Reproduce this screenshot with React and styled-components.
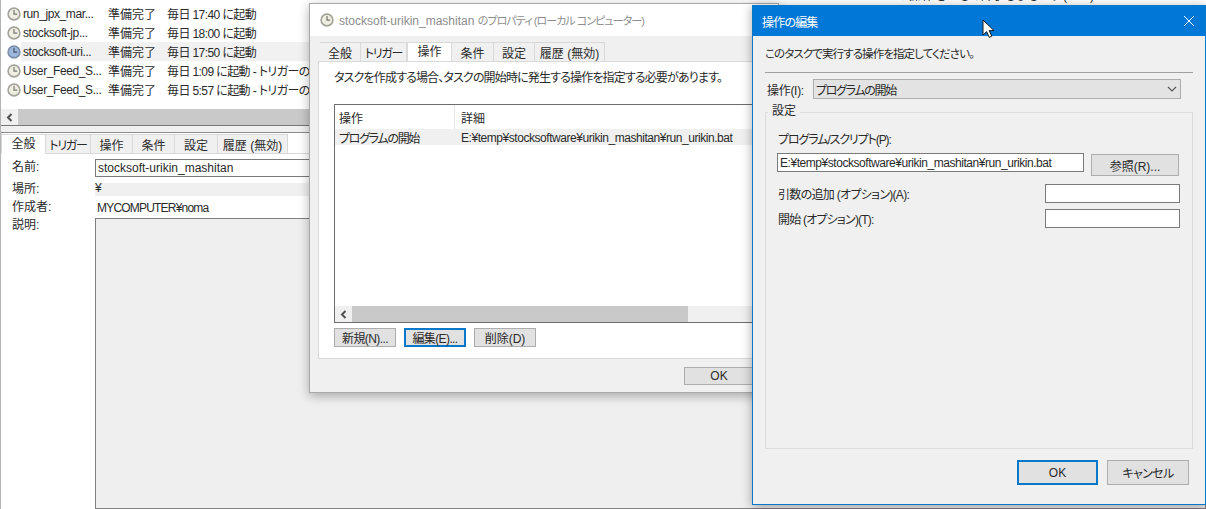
import React from "react";
import styled, { createGlobalStyle } from "styled-components";

const GlobalStyle = createGlobalStyle`
  html, body {
    margin: 0;
    padding: 0;
    background: #efefef;
  }
  * {
    box-sizing: border-box;
  }
`;

const Desktop = styled.div`
  position: relative;
  width: 1206px;
  height: 509px;
  overflow: hidden;
  background: #efefef;
  color: #2a2a2a;
  font-family: "Liberation Sans", "Noto Sans CJK JP", sans-serif;
  font-size: 12px;
  font-feature-settings: "palt";
  white-space: nowrap;
`;

const Squeezed = styled.span`
  letter-spacing: ${(p) => p.$ls}px;
  font-size: ${(p) => p.$size || 12}px;
`;

/* back window: task scheduler */
const MainWindow = styled.div`
  width: 100%;
  height: 100%;
  display: flex;
  flex-direction: column;
  border-left: 1px solid #b4b4b4;
`;

const TaskList = styled.div`
  height: 126px;
  background: #fff;
  border-bottom: 1px solid #777;
  display: flex;
  flex-direction: column;
  overflow: hidden;
  justify-content: flex-end;
`;

const TaskRow = styled.div`
  height: 19px;
  flex: none;
  display: flex;
  align-items: center;
  padding-left: 6px;
  background: ${(p) => (p.$selected ? "linear-gradient(90deg, #fff 20px, #f1f1f1 20px)" : "transparent")};
`;

const IconSlot = styled.div`
  width: 14px;
  height: 14px;
  flex: none;
  display: flex;
`;

const TaskName = styled.span`
  width: 85px;
  margin-left: 2px;
  letter-spacing: -0.4px;
`;

const TaskStatus = styled.span`
  width: 59px;
`;

const TaskTrigger = styled.span`
  width: 738px;
  flex: none;
  letter-spacing: -0.6px;
`;

const TaskResult = styled.span`
  letter-spacing: 0.9px;
  margin-left: -20px;
`;

const ListScroll = styled.div`
  height: 16px;
  flex: none;
  margin-top: 10px;
  background: #c9c9c9;
  display: flex;
`;

const ScrollArrow = styled.div`
  width: 17px;
  background: #f0f0f0;
  display: flex;
  align-items: center;
  justify-content: center;
`;

const Splitter = styled.div`
  height: 7px;
  flex: none;
  background: #f0f0f0;
  border-bottom: 1px solid #8c8c8c;
`;

const TabStrip = styled.div`
  display: flex;
  align-items: flex-end;
  height: ${(p) => p.$h}px;
  flex: none;
  padding-left: ${(p) => p.$pad}px;
  background: ${(p) => p.$bg || "#fff"};
  border-bottom: 1px solid #d9d9d9;
`;

const Tab = styled.div`
  width: ${(p) => p.$w}px;
  height: ${(p) => (p.$active ? "100%" : "calc(100% - 1px)")};
  display: flex;
  align-items: center;
  justify-content: center;
  background: ${(p) => (p.$active ? "#fff" : "#f0f0f0")};
  border: 1px solid #d9d9d9;
  border-left: ${(p) => (p.$active ? "1px solid #d9d9d9" : "none")};
  border-bottom: ${(p) => (p.$active ? "1px solid #fff" : "none")};
  margin-bottom: ${(p) => (p.$active ? "-1px" : "0")};
  padding-bottom: ${(p) => (p.$active ? "3px" : "0")};
  letter-spacing: ${(p) => (p.$tight ? "-1.2px" : "0")};
`;

const GeneralPane = styled.div`
  flex: 1;
  background: #fff;
  padding: 5px 0 0 11px;
  display: grid;
  grid-template-columns: 83px 1fr;
  grid-template-rows: 18px 22px 19px 1fr;
`;

const FieldLabel = styled.div`
  line-height: 15px;
  padding-top: ${(p) => p.$top || 0}px;
`;

const NameBox = styled.div`
  border: 1px solid #7a7a7a;
  border-right: none;
  padding: 0 2px;
  display: flex;
  align-items: center;
`;

const LocationStrip = styled.div`
  margin-top: 6px;
  height: 13px;
  background: #f0f0f0;
  line-height: 10px;
`;

const AuthorValue = styled.div`
  padding: 2px 2px 0;
  line-height: 15px;
  letter-spacing: -0.8px;
`;

const DescBox = styled.div`
  border: 1px solid #808080;
  background: #efefef;
`;

/* properties dialog */
const PropsWindow = styled.div`
  position: absolute;
  left: 309px;
  top: 3px;
  width: 470px;
  height: 390px;
  background: #f0f0f0;
  border: 1px solid #a8a8a8;
  box-shadow: 0 3px 10px rgba(0, 0, 0, 0.3);
  display: flex;
  flex-direction: column;
`;

const PropsTitle = styled.div`
  height: 32px;
  flex: none;
  background: #fff;
  display: flex;
  align-items: center;
  gap: 5px;
  padding-left: 10px;
  color: #8d8d8d;
`;

const PropsBody = styled.div`
  flex: 1;
  display: flex;
  flex-direction: column;
  padding: 5px 0 0 8px;
`;

const PropsTabs = styled(TabStrip)`
  background: #f0f0f0;
  border-bottom: none;
`;

const ActionPane = styled.div`
  height: 298px;
  background: #fff;
  border: 1px solid #d9d9d9;
  border-right: none;
  padding: 8px 0 0 15px;
  display: flex;
  flex-direction: column;
`;

const PaneText = styled.div`
  height: 16px;
  line-height: 16px;
  letter-spacing: -0.85px;
`;

const ActionTable = styled.div`
  margin-top: 18px;
  height: 219px;
  border: 1px solid #6d6d6d;
  border-right: none;
  display: flex;
  flex-direction: column;
`;

const TableHead = styled.div`
  height: 24px;
  flex: none;
  display: grid;
  grid-template-columns: 119px 1fr;
  align-items: center;
  > span {
    height: 100%;
    display: flex;
    align-items: center;
    padding-left: 4px;
  }
  > span + span {
    border-left: 1px solid #e5e5e5;
    padding-left: 6px;
  }
`;

const TableRow = styled.div`
  height: 16px;
  flex: none;
  display: grid;
  grid-template-columns: 119px 1fr;
  align-items: center;
  background: #f0f0f0;
  > span {
    padding-left: 4px;
    letter-spacing: -1.3px;
  }
  > span + span {
    padding-left: 7px;
    letter-spacing: -0.45px;
  }
`;

const TableSpace = styled.div`
  flex: 1;
`;

const TableScroll = styled.div`
  height: 16px;
  flex: none;
  display: flex;
  background: #f0f0f0;
`;

const ScrollThumb = styled.div`
  width: 336px;
  background: #c9c9c9;
`;

const ButtonRow = styled.div`
  display: flex;
  gap: ${(p) => p.$gap}px;
  margin-top: ${(p) => p.$top || 0}px;
  justify-content: ${(p) => (p.$end ? "flex-end" : "flex-start")};
  padding-right: ${(p) => p.$right || 0}px;
  padding-left: ${(p) => p.$left || 0}px;
`;

const Button = styled.div`
  width: ${(p) => p.$w}px;
  height: ${(p) => p.$h}px;
  flex: none;
  display: flex;
  align-items: center;
  justify-content: center;
  background: #e1e1e1;
  border: ${(p) => (p.$focus ? "2px solid #0a78c8" : "1px solid #adadad")};
  letter-spacing: ${(p) => (p.$tight ? "-0.6px" : "0")};
`;

/* edit dialog */
const EditWindow = styled.div`
  position: absolute;
  left: 752px;
  top: 5px;
  width: 454px;
  height: 500px;
  background: #f0f0f0;
  border: 1px solid #0a78c8;
  box-shadow: 0 2px 10px rgba(0, 0, 0, 0.35);
  display: flex;
  flex-direction: column;
`;

const EditTitle = styled.div`
  height: 30px;
  flex: none;
  background: #0078d7;
  color: #fff;
  display: flex;
  align-items: center;
  justify-content: space-between;
  padding: 0 10px 0 9px;
  letter-spacing: -0.8px;
`;

const EditBody = styled.div`
  flex: 1;
  display: flex;
  flex-direction: column;
  padding: 0 12px;
`;

const EditIntro = styled.div`
  height: 37px;
  padding-top: 10px;
  line-height: 16px;
  border-bottom: 1px solid #a0a0a0;
  font-size: 11.5px;
  letter-spacing: -0.9px;
`;

const ActionRow = styled.div`
  display: flex;
  align-items: center;
  gap: 9px;
  margin-top: 6px;
  padding: 0 12px 0 2px;
  letter-spacing: -0.3px;
`;

const ActionSelect = styled.div`
  flex: 1;
  height: 20px;
  background: #e3e3e3;
  border: 1px solid #adadad;
  display: flex;
  align-items: center;
  justify-content: space-between;
  padding: 0 3px 0 2px;
  letter-spacing: -1.3px;
`;

const SettingsGroup = styled.div`
  position: relative;
  margin-top: 13px;
  height: 337px;
  border: 1px solid #dcdcdc;
  padding: 19px 12px 0 11px;
  display: flex;
  flex-direction: column;
`;

const GroupLegend = styled.div`
  position: absolute;
  top: -10px;
  left: 2px;
  padding: 0 4px;
  background: #f0f0f0;
  line-height: 16px;
`;

const ScriptLabel = styled.div`
  height: 16px;
  line-height: 16px;
  padding-left: 1px;
  letter-spacing: -1.1px;
`;

const ScriptRow = styled.div`
  display: flex;
  align-items: flex-start;
  gap: 7px;
  margin-top: 5px;
`;

const BrowseSlot = styled.div`
  padding-top: 1px;
`;

const TextBox = styled.div`
  width: ${(p) => p.$w}px;
  height: 19px;
  flex: none;
  background: #fff;
  border: 1px solid #7a7a7a;
  padding: 0 2px;
  display: flex;
  align-items: center;
  letter-spacing: -0.45px;
`;

const OptionRow = styled.div`
  display: flex;
  align-items: center;
  justify-content: space-between;
  margin-top: ${(p) => p.$top}px;
  padding-left: 1px;
`;

const Pointer = styled.svg`
  position: absolute;
  left: 982px;
  top: 19px;
`;

function ClockIcon({ blue }) {
  const face = blue ? "#9db8dc" : "#eeeee2";
  const rim = blue ? "#7c8ea8" : "#a3a39b";
  return (
    <svg width="14" height="14" viewBox="0 0 14 14">
      <circle cx="7" cy="7" r="5.9" fill={face} stroke={rim} strokeWidth="1.6" />
      <path d="M7 3v4.2h3.2" fill="none" stroke={blue ? "#47556b" : "#77776f"} strokeWidth="1.2" />
    </svg>
  );
}

function LeftArrow() {
  return (
    <svg width="7" height="9" viewBox="0 0 7 9">
      <path d="M5.5 1 2 4.5 5.5 8" fill="none" stroke="#505050" strokeWidth="2" />
    </svg>
  );
}

const tasks = [
  { name: "", status: "", trigger: "", result: "この操作を正しく終了しました。 (0x0)" },
  { name: "run_jpx_mar...", status: "準備完了", trigger: "毎日 17:40 に起動" },
  { name: "stocksoft-jp...", status: "準備完了", trigger: "毎日 18:00 に起動" },
  { name: "stocksoft-uri...", status: "準備完了", trigger: "毎日 17:50 に起動", selected: true },
  { name: "User_Feed_S...", status: "準備完了", trigger: "毎日 1:09 に起動 - トリガーの有効期限" },
  { name: "User_Feed_S...", status: "準備完了", trigger: "毎日 5:57 に起動 - トリガーの有効期限" },
];

const mainTabs = [
  { label: "全般", w: 45, active: true },
  { label: "トリガー", w: 45, tight: true },
  { label: "操作", w: 42 },
  { label: "条件", w: 42 },
  { label: "設定", w: 43 },
  { label: "履歴 (無効)", w: 70 },
];

const propTabs = [
  { label: "全般", w: 41 },
  { label: "トリガー", w: 46, tight: true },
  { label: "操作", w: 45, active: true },
  { label: "条件", w: 42 },
  { label: "設定", w: 41 },
  { label: "履歴 (無効)", w: 70 },
];

export default function App() {
  return (
    <Desktop>
      <GlobalStyle />
      <MainWindow>
        <TaskList>
          {tasks.map((t, i) => (
            <TaskRow key={i} $selected={t.selected}>
              <IconSlot>{t.name && <ClockIcon blue={t.selected} />}</IconSlot>
              <TaskName>{t.name}</TaskName>
              <TaskStatus>{t.status}</TaskStatus>
              <TaskTrigger>{t.trigger}</TaskTrigger>
              {t.result && <TaskResult>{t.result}</TaskResult>}
            </TaskRow>
          ))}
          <ListScroll>
            <ScrollArrow>
              <LeftArrow />
            </ScrollArrow>
          </ListScroll>
        </TaskList>
        <Splitter />
        <TabStrip $h={21} $pad={0} $bg="#fff">
          {mainTabs.map((t) => (
            <Tab key={t.label} $w={t.w} $active={t.active} $tight={t.tight}>
              {t.label}
            </Tab>
          ))}
        </TabStrip>
        <GeneralPane>
          <FieldLabel $top={1}>名前:</FieldLabel>
          <NameBox>stocksoft-urikin_mashitan</NameBox>
          <FieldLabel $top={5}>場所:</FieldLabel>
          <LocationStrip>¥</LocationStrip>
          <FieldLabel $top={1}>作成者:</FieldLabel>
          <AuthorValue>MYCOMPUTER¥noma</AuthorValue>
          <FieldLabel>説明:</FieldLabel>
          <DescBox />
        </GeneralPane>
      </MainWindow>

      <PropsWindow>
        <PropsTitle>
          <ClockIcon />
          <span>
            stocksoft-urikin_mashitan <Squeezed $ls={-0.95} $size={11}>のプロパティ (ローカル コンピューター)</Squeezed>
          </span>
        </PropsTitle>
        <PropsBody>
          <PropsTabs $h={20} $pad={2}>
            {propTabs.map((t) => (
              <Tab key={t.label} $w={t.w} $active={t.active} $tight={t.tight}>
                {t.label}
              </Tab>
            ))}
          </PropsTabs>
          <ActionPane>
            <PaneText>タスクを作成する場合、タスクの開始時に発生する操作を指定する必要があります。</PaneText>
            <ActionTable>
              <TableHead>
                <span>操作</span>
                <span>詳細</span>
              </TableHead>
              <TableRow>
                <span>プログラムの開始</span>
                <span>E:¥temp¥stocksoftware¥urikin_mashitan¥run_urikin.bat</span>
              </TableRow>
              <TableSpace />
              <TableScroll>
                <ScrollArrow>
                  <LeftArrow />
                </ScrollArrow>
                <ScrollThumb />
              </TableScroll>
            </ActionTable>
            <ButtonRow $gap={8} $top={5}>
              <Button $w={62} $h={19} $tight>新規(N)...</Button>
              <Button $w={62} $h={19} $tight $focus>編集(E)...</Button>
              <Button $w={62} $h={19}>削除(D)</Button>
            </ButtonRow>
          </ActionPane>
          <ButtonRow $gap={0} $top={8} $left={366}>
            <Button $w={70} $h={18}>OK</Button>
          </ButtonRow>
        </PropsBody>
      </PropsWindow>

      <EditWindow>
        <EditTitle>
          操作の編集
          <svg width="12" height="12" viewBox="0 0 12 12">
            <path d="M1 1l10 10M11 1 1 11" stroke="#fff" strokeWidth="1" />
          </svg>
        </EditTitle>
        <EditBody>
          <EditIntro>このタスクで実行する操作を指定してください。</EditIntro>
          <ActionRow>
            操作(I):
            <ActionSelect>
              プログラムの開始
              <svg width="10" height="6" viewBox="0 0 10 6">
                <path d="M1 1l4 4 4-4" fill="none" stroke="#555" strokeWidth="1.1" />
              </svg>
            </ActionSelect>
          </ActionRow>
          <SettingsGroup>
            <GroupLegend>設定</GroupLegend>
            <ScriptLabel>プログラム/スクリプト(P):</ScriptLabel>
            <ScriptRow>
              <TextBox $w={307}>E:¥temp¥stocksoftware¥urikin_mashitan¥run_urikin.bat</TextBox>
              <BrowseSlot>
                <Button $w={88} $h={22}>参照(R)...</Button>
              </BrowseSlot>
            </ScriptRow>
            <OptionRow $top={8}>
              <Squeezed $ls={-0.7}>引数の追加 (オプション)(A):</Squeezed>
              <TextBox $w={135} />
            </OptionRow>
            <OptionRow $top={6}>
              <Squeezed $ls={-0.8}>開始 (オプション)(T):</Squeezed>
              <TextBox $w={135} />
            </OptionRow>
          </SettingsGroup>
          <ButtonRow $gap={9} $top={11} $end $right={4}>
            <Button $w={81} $h={25} $focus>OK</Button>
            <Button $w={82} $h={25} $tight>キャンセル</Button>
          </ButtonRow>
        </EditBody>
      </EditWindow>

      <Pointer width="14" height="20" viewBox="0 0 14 20">
        <path d="M1 1v15l3.6-3.4 2.6 5.8 2.6-1.2-2.6-5.6H12z" fill="#fff" stroke="#1a1a1a" strokeWidth="1" />
      </Pointer>
    </Desktop>
  );
}
